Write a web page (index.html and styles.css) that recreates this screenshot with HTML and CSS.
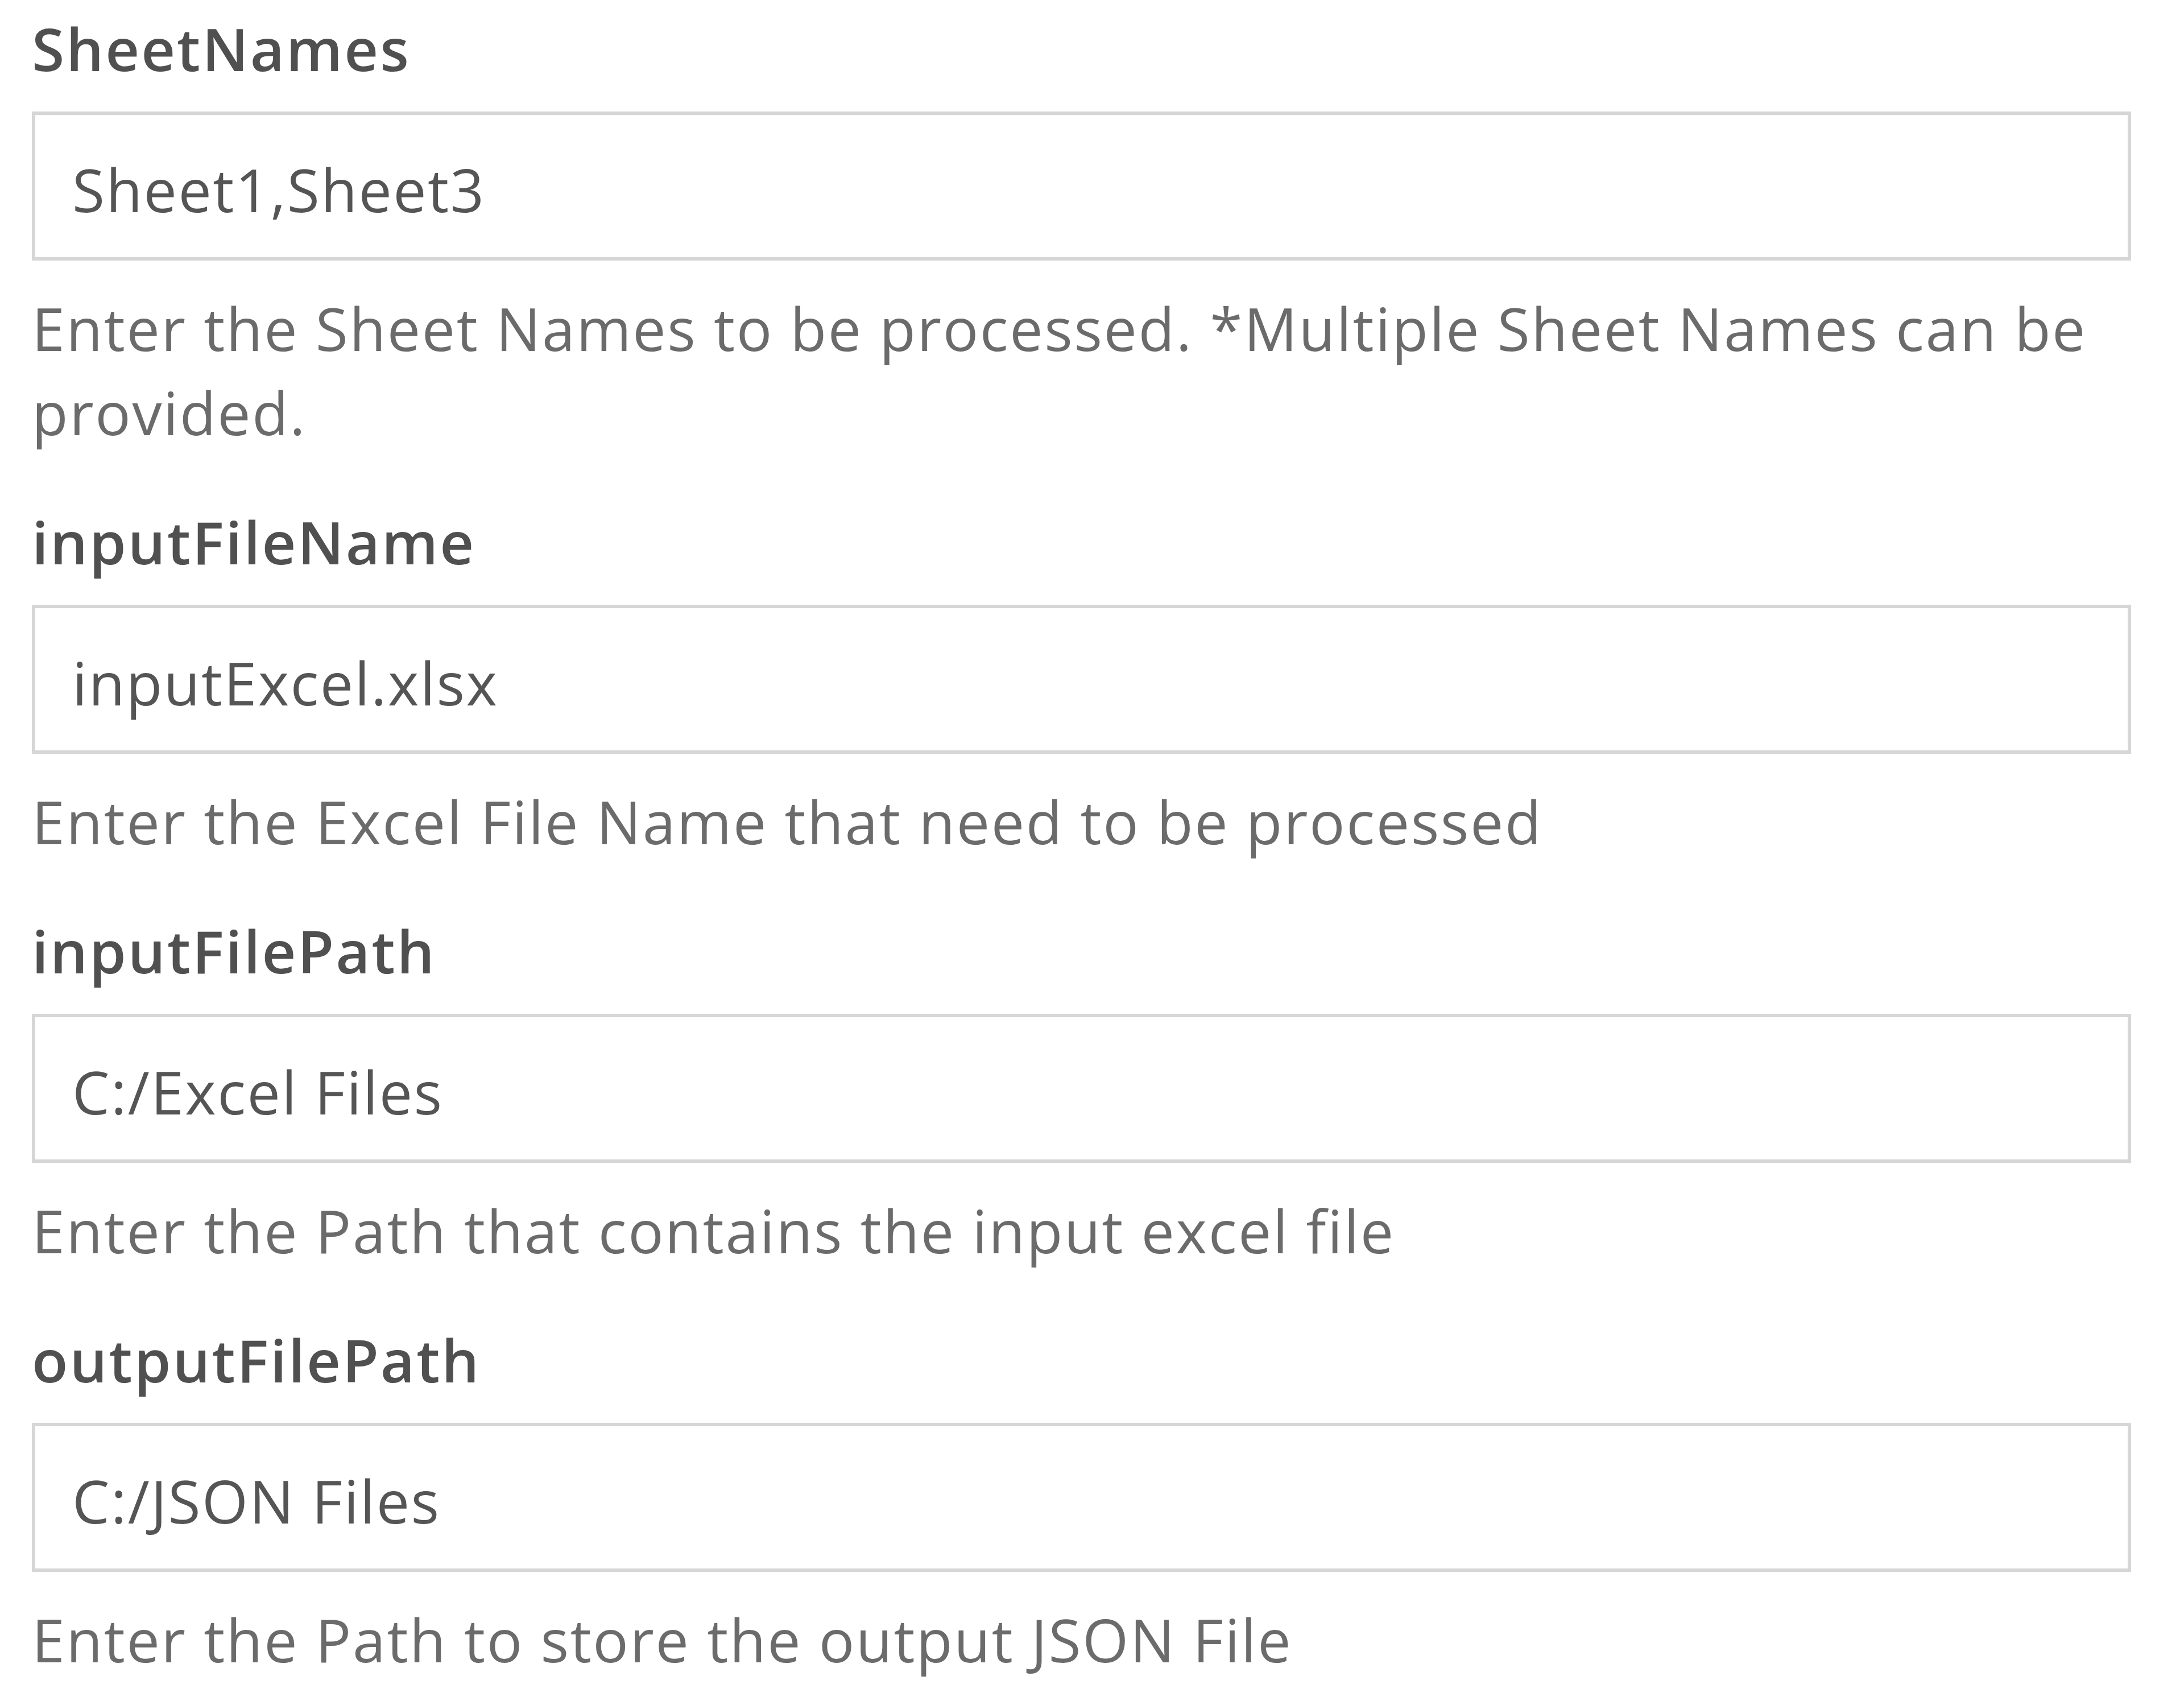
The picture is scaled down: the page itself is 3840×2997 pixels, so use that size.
FILE: index.html
```html
<!DOCTYPE html>
<html lang="en">
<head>
<meta charset="utf-8">
<title>Parameters</title>
<link rel="stylesheet" href="styles.css">
</head>
<body>
<form class="form">
  <div class="field">
    <label class="label">SheetNames</label>
    <div class="input">Sheet1,Sheet3</div>
    <p class="help">Enter the Sheet Names to be processed. *Multiple Sheet Names can be provided.</p>
  </div>
  <div class="field">
    <label class="label">inputFileName</label>
    <div class="input">inputExcel.xlsx</div>
    <p class="help">Enter the Excel File Name that need to be processed</p>
  </div>
  <div class="field">
    <label class="label">inputFilePath</label>
    <div class="input">C:/Excel Files</div>
    <p class="help">Enter the Path that contains the input excel file</p>
  </div>
  <div class="field">
    <label class="label">outputFilePath</label>
    <div class="input">C:/JSON Files</div>
    <p class="help">Enter the Path to store the output JSON File</p>
  </div>
</form>
</body>
</html>
```
FILE: styles.css
```css
html, body {
  margin: 0;
  padding: 0;
  background: #ffffff;
}
body {
  font-family: "Open Sans", "Noto Sans", sans-serif;
  font-size: 104px;
  line-height: 148px;
}
.form {
  display: flex;
  flex-direction: column;
  gap: 79px;
  padding: 11px 93px 0 56px;
}
.field {
  display: flex;
  flex-direction: column;
}
.label {
  font-weight: 600;
  color: #505050;
  letter-spacing: 3px;
  margin-bottom: 37px;
}
.input {
  box-sizing: border-box;
  height: 262px;
  border: 6px solid #d6d6d6;
  background: #fff;
  color: #555555;
  letter-spacing: 2.4px;
  padding: 12px 0 0 65px;
  display: flex;
  align-items: center;
}
.help {
  margin: 45px 0 0 0;
  color: #6b6b6b;
  letter-spacing: 2.6px;
}
```
